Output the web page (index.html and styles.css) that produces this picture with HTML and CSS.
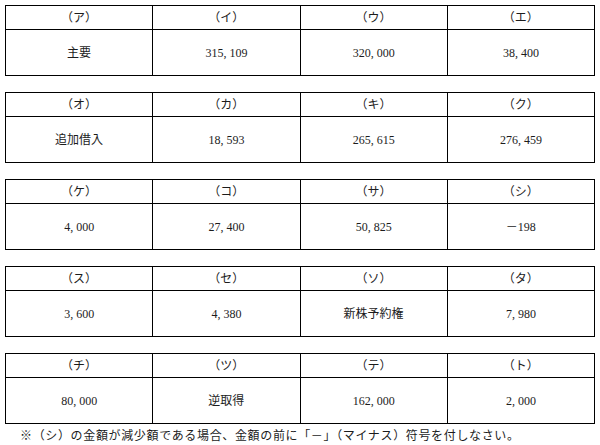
FILE: index.html
```html
<!DOCTYPE html>
<html lang="ja">
<head>
<meta charset="utf-8">
<title>解答欄</title>
<link rel="stylesheet" href="styles.css">
</head>
<body>
<main class="page">
  <table class="grid">
    <tr class="head"><th>（ア）</th><th>（イ）</th><th>（ウ）</th><th>（エ）</th></tr>
    <tr class="data"><td>主要</td><td>315, 109</td><td>320, 000</td><td>38, 400</td></tr>
  </table>
  <table class="grid">
    <tr class="head"><th>（オ）</th><th>（カ）</th><th>（キ）</th><th>（ク）</th></tr>
    <tr class="data"><td>追加借入</td><td>18, 593</td><td>265, 615</td><td>276, 459</td></tr>
  </table>
  <table class="grid">
    <tr class="head"><th>（ケ）</th><th>（コ）</th><th>（サ）</th><th>（シ）</th></tr>
    <tr class="data"><td>4, 000</td><td>27, 400</td><td>50, 825</td><td>－198</td></tr>
  </table>
  <table class="grid">
    <tr class="head"><th>（ス）</th><th>（セ）</th><th>（ソ）</th><th>（タ）</th></tr>
    <tr class="data"><td>3, 600</td><td>4, 380</td><td>新株予約権</td><td>7, 980</td></tr>
  </table>
  <table class="grid">
    <tr class="head"><th>（チ）</th><th>（ツ）</th><th>（テ）</th><th>（ト）</th></tr>
    <tr class="data"><td>80, 000</td><td>逆取得</td><td>162, 000</td><td>2, 000</td></tr>
  </table>
  <p class="note">※（シ）の金額が減少額である場合、金額の前に「－」（マイナス）符号を付しなさい。</p>
</main>
</body>
</html>
```
FILE: styles.css
```css
html, body {
  margin: 0;
  background: #ffffff;
}
body {
  font-family: "Liberation Serif", "Noto Sans CJK JP", serif;
  font-size: 12px;
  color: #1c1c1c;
}
.page {
  padding: 5px 0 0 5px;
  display: flex;
  flex-direction: column;
  align-items: flex-start;
}
.grid {
  border-collapse: collapse;
  table-layout: fixed;
  width: 590px;
  margin: 0 0 16px 0;
}
.grid th,
.grid td {
  border: 1px solid #000;
  text-align: center;
  vertical-align: middle;
  padding: 0;
  font-weight: normal;
  line-height: 14px;
}
.head {
  height: 24px;
}
.data {
  height: 46px;
}
.note {
  margin: -16px 0 0 15px;
  line-height: 24px;
  letter-spacing: 0.65px;
}
```
